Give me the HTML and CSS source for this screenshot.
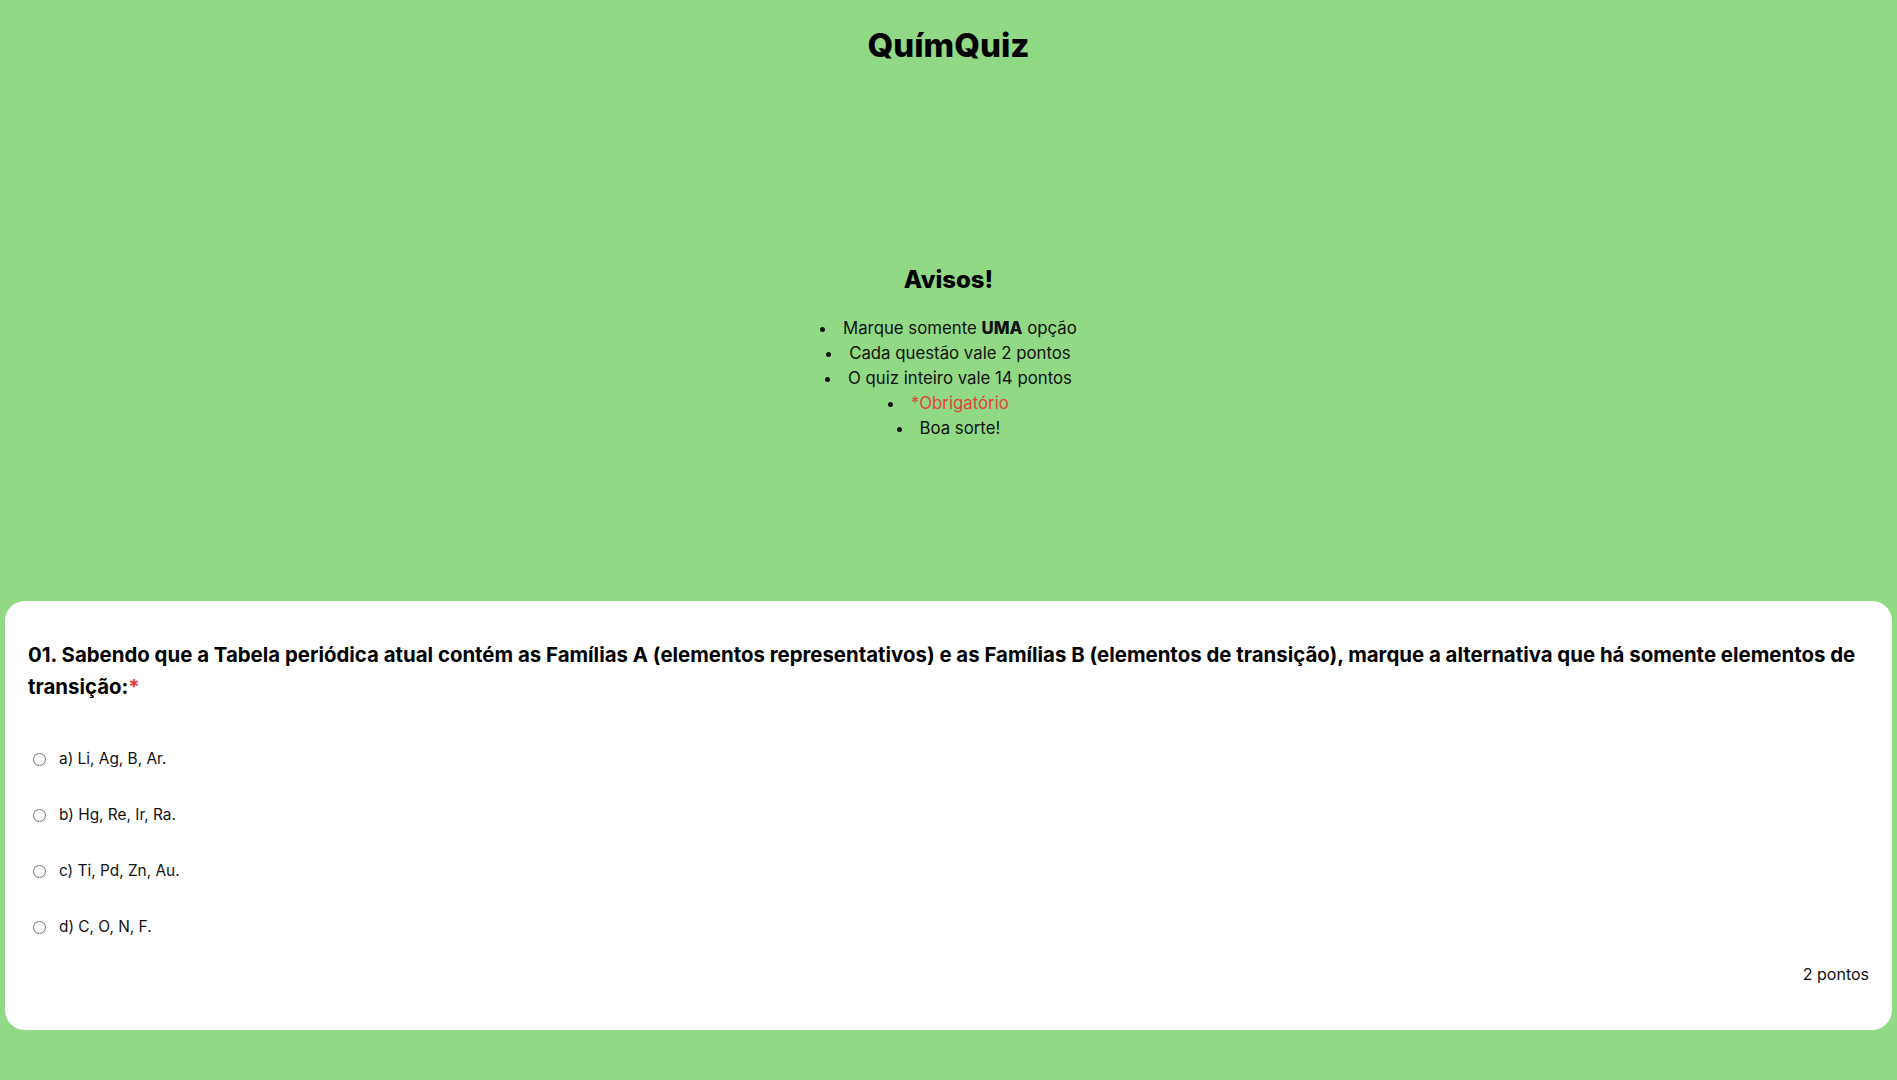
FILE: index.html
```html
<!DOCTYPE html>
<html lang="pt-BR">
<head>
<meta charset="utf-8">
<title>QuímQuiz</title>
<link rel="stylesheet" href="styles.css">
</head>
<body>
<header class="header">
  <h1 class="title">QuímQuiz</h1>
</header>
<section class="avisos">
  <h2 class="avisos-title">Avisos!</h2>
  <ul class="avisos-list">
    <li>Marque somente <strong>UMA</strong> opção</li>
    <li>Cada questão vale 2 pontos</li>
    <li>O quiz inteiro vale 14 pontos</li>
    <li class="req">*Obrigatório</li>
    <li>Boa sorte!</li>
  </ul>
</section>
<main class="card">
  <p class="question">01. Sabendo que a Tabela periódica atual contém as Famílias A (elementos representativos) e as Famílias B (elementos de transição), marque a alternativa que há somente elementos de transição:<span class="star">*</span></p>
  <div class="options">
    <label class="option"><input type="radio" name="q1"><span class="opt-text">a) Li, Ag, B, Ar.</span></label>
    <label class="option"><input type="radio" name="q1"><span class="opt-text">b) Hg, Re, Ir, Ra.</span></label>
    <label class="option"><input type="radio" name="q1"><span class="opt-text">c) Ti, Pd, Zn, Au.</span></label>
    <label class="option"><input type="radio" name="q1"><span class="opt-text">d) C, O, N, F.</span></label>
  </div>
  <p class="points">2 pontos</p>
</main>
</body>
</html>
```
FILE: styles.css
```css
* { box-sizing: border-box; }
html, body { margin: 0; padding: 0; }
body {
  background: #91d984;
  font-family: "Inter", "DejaVu Sans", sans-serif;
  color: #111;
  min-height: 1080px;
}
.header {
  display: flex;
  justify-content: center;
  padding-top: 21px;
}
.title {
  margin: 0;
  font-size: 33px;
  line-height: 48px;
  font-weight: 800;
  color: #000;
}
.avisos {
  padding-top: 193px;
  padding-bottom: 160px;
  text-align: center;
}
.avisos-title {
  margin: 0 0 18px;
  font-size: 24px;
  line-height: 36px;
  font-weight: 800;
  color: #000;
}
.avisos-list {
  margin: 0;
  padding: 0;
  list-style: disc inside;
  font-size: 16.8px;
  line-height: 25px;
}
.avisos-list strong { font-weight: 800; }
.avisos-list .req { color: #e3433b; }
.avisos-list .req::marker { color: #111; }
.card {
  margin: 0 5px;
  background: #fff;
  border-radius: 20px;
  padding: 38px 23px 44px;
}
.question {
  margin: 0;
  font-size: 20.4px;
  line-height: 32px;
  font-weight: 700;
  color: #000;
}
.star { color: #e53935; }
.options {
  display: flex;
  flex-direction: column;
  gap: 32px;
  margin-top: 44px;
}
.option {
  display: flex;
  align-items: center;
  font-size: 15.4px;
  line-height: 24px;
}
.option input { margin: 0 13px 0 5px; width: 13px; height: 13px; }
.points {
  margin: 23px 0 0;
  text-align: right;
  font-size: 16px;
  line-height: 24px;
}
```
